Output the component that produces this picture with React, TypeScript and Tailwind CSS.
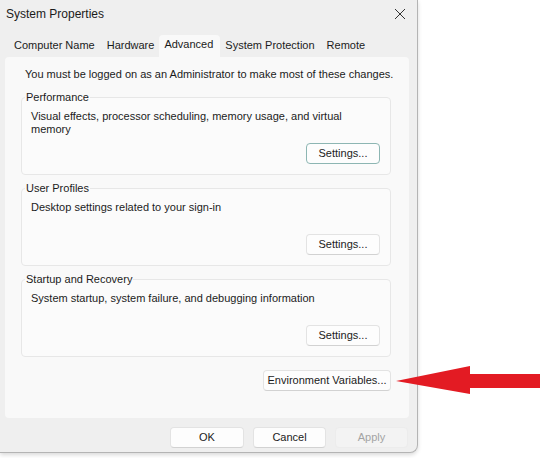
import React from 'react'

const font = "font-['Liberation_Sans',Arial,sans-serif]"

function Btn({ children, w = 'w-[74px]', focus = false, disabled = false }: { children: React.ReactNode; w?: string; focus?: boolean; disabled?: boolean }) {
  const base = 'h-[21px] rounded-[4px] text-[11px] flex items-center justify-center'
  if (disabled) return <div className={`${base} ${w} bg-[#f3f3f3] border border-[#ececec] text-[#a3a3a3]`}>{children}</div>
  if (focus) return <div className={`${base} ${w} bg-[#fdfdfd] border-[1.5px] border-[#8db6b3] text-[#1b1b1b]`}>{children}</div>
  return <div className={`${base} ${w} bg-[#fdfdfd] border border-[#e3e3e3] border-b-[#d2d2d2] text-[#1b1b1b]`}>{children}</div>
}

function Group({ title, lines, focus = false, first = false }: { title: string; lines: string[]; focus?: boolean; first?: boolean }) {
  return (
    <fieldset className={`${first ? 'mt-[10px]' : 'mt-[7px]'} border border-[#e7e7e7] rounded-[4px] bg-[#fbfbfb] pl-[3px] pr-[10px]`}>
      <legend className="text-[11px] leading-[13px] text-[#1b1b1b] px-[1px]">{title}</legend>
      <div className="h-[70px] flex flex-col pl-[6px] pt-[6px] pb-[10px]">
        <div className="text-[11px] leading-[13px] text-[#1b1b1b]">
          {lines.map((l) => (
            <div key={l}>{l}</div>
          ))}
        </div>
        <div className="mt-auto flex justify-end">
          <Btn focus={focus}>Settings...</Btn>
        </div>
      </div>
    </fieldset>
  )
}

export default function App() {
  const tabs = ['Computer Name', 'Hardware', 'Advanced', 'System Protection', 'Remote']
  return (
    <div className={`relative w-[540px] h-[458px] bg-white overflow-hidden ${font}`}>
      <div className="w-[418px] h-[453px] bg-[#efefef] border-r border-b border-[#b4b4b4] rounded-br-[8px] shadow-[0_2px_4px_rgba(0,0,0,0.15)] flex flex-col">
        <div className="h-[28px] flex items-center justify-between pl-[6px] pr-[11px]">
          <span className="text-[12px] text-[#1b1b1b]">System Properties</span>
          <svg width="12" height="12" viewBox="0 0 12 12">
            <path d="M1 1L11 11M11 1L1 11" stroke="#333" strokeWidth="1" fill="none" />
          </svg>
        </div>
        <div className="h-[29px] flex items-end pl-[8px]">
          {tabs.map((t) =>
            t === 'Advanced' ? (
              <div key={t} className="h-[22px] px-[5px] pr-[7px] mx-[-1px] bg-[#f9f9f9] rounded-t-[4px] flex items-center pb-[3px] text-[11px] text-[#1b1b1b]">
                {t}
              </div>
            ) : (
              <div key={t} className="h-[22px] px-[6px] flex items-center pb-[1px] text-[11px] text-[#1b1b1b]">
                {t}
              </div>
            )
          )}
        </div>
        <div className="ml-[5px] w-[404px] h-[361px] bg-[#f9f9f9] rounded-[4px] px-[16px] pr-[18px] pt-[11px] flex flex-col">
          <div className="ml-[4px] whitespace-nowrap text-[11px] leading-[13px] text-[#1b1b1b]">You must be logged on as an Administrator to make most of these changes.</div>
          <Group first focus title="Performance" lines={['Visual effects, processor scheduling, memory usage, and virtual', 'memory']} />
          <Group title="User Profiles" lines={['Desktop settings related to your sign-in']} />
          <Group title="Startup and Recovery" lines={['System startup, system failure, and debugging information']} />
          <div className="mt-[13px] flex justify-end">
            <Btn w="w-[128px]">Environment Variables...</Btn>
          </div>
        </div>
        <div className="flex justify-end gap-[9px] pt-[9px] pr-[9px]">
          <Btn w="w-[74px]">OK</Btn>
          <Btn w="w-[73px]">Cancel</Btn>
          <Btn w="w-[73px]" disabled>Apply</Btn>
        </div>
      </div>
      <svg className="absolute left-[394px] top-[364px]" width="146" height="32" viewBox="0 0 146 32">
        <path d="M2 17 L76 2 L76 10 L146 10 L146 24 L76 24 L76 30 Z" fill="#e31b23" />
      </svg>
    </div>
  )
}
